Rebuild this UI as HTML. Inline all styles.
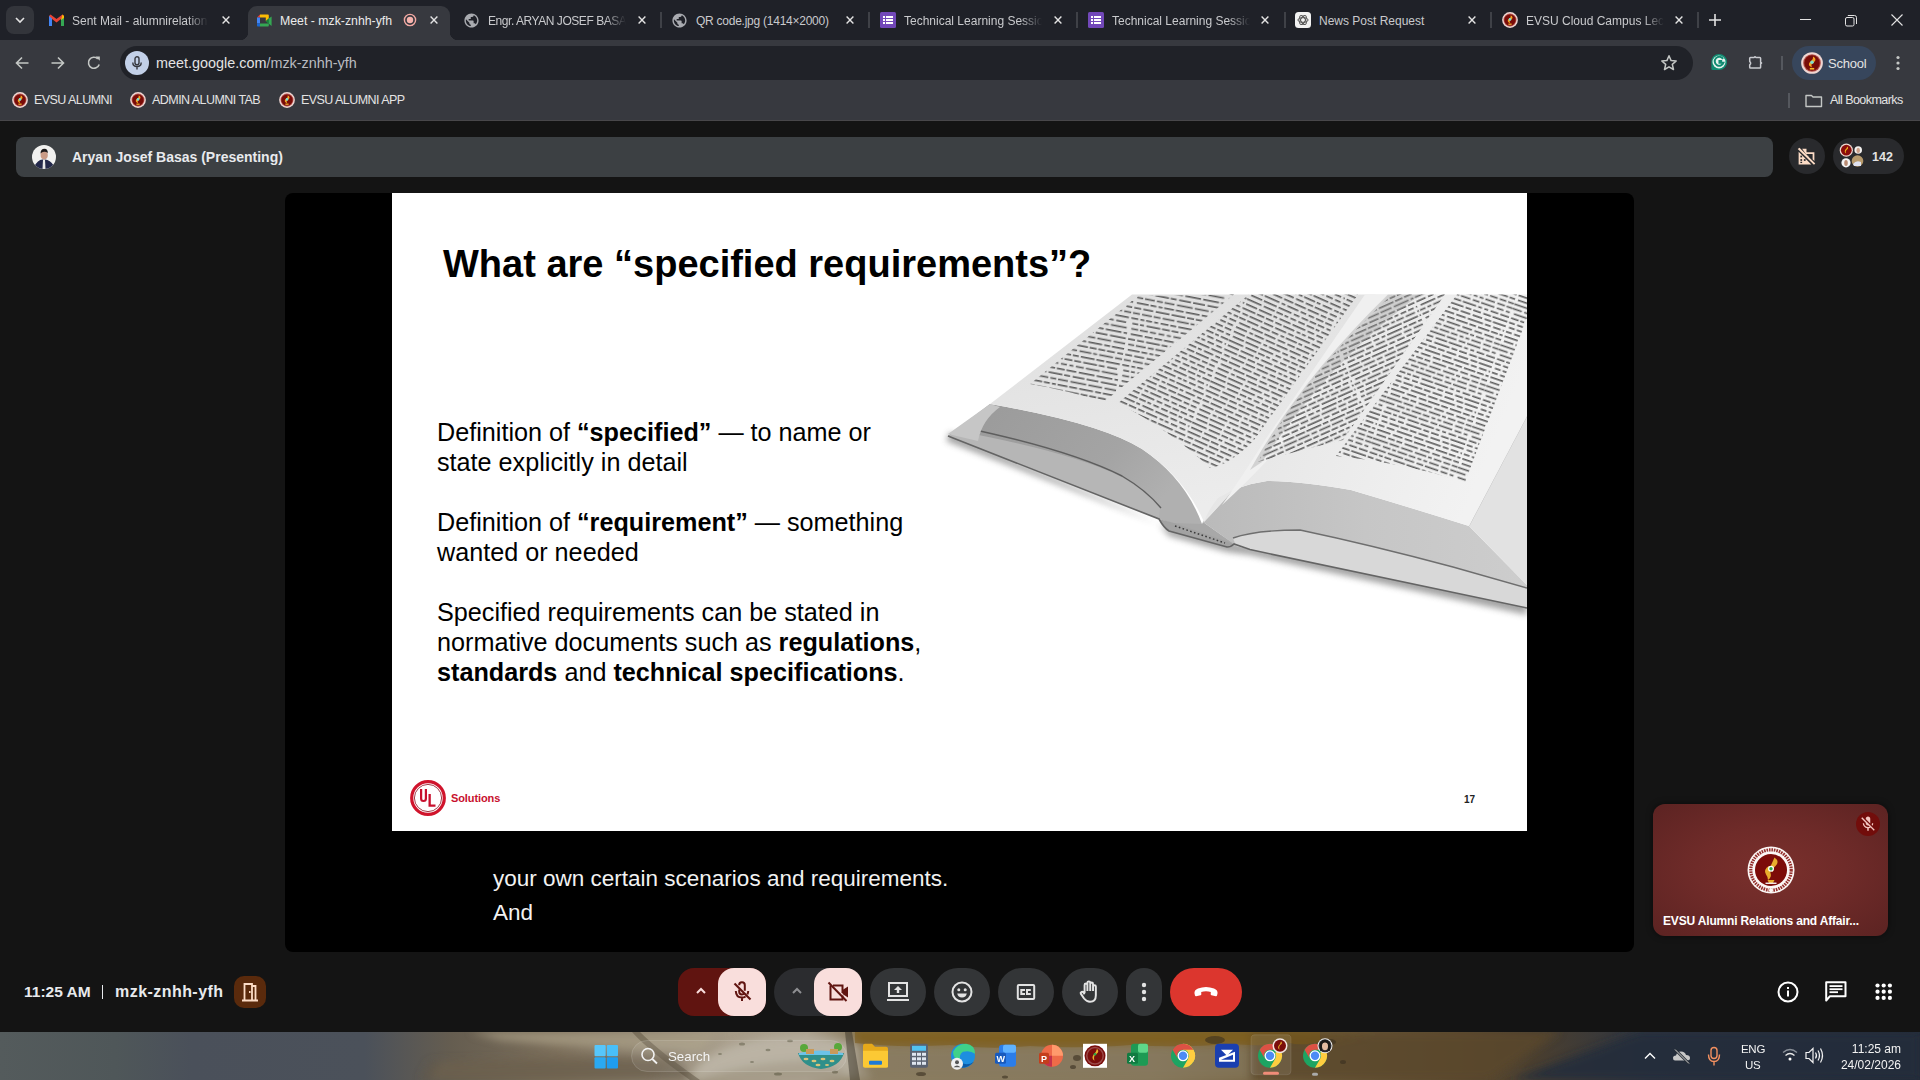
<!DOCTYPE html>
<html><head><meta charset="utf-8">
<style>
*{margin:0;padding:0;box-sizing:border-box}
html,body{width:1920px;height:1080px;overflow:hidden;background:#141414;font-family:"Liberation Sans",sans-serif}
.abs{position:absolute}
#tabs{left:0;top:0;width:1920px;height:40px;background:#1f2128}
#toolbar{left:0;top:40px;width:1920px;height:40px;background:#37393f}
#bookmarks{left:0;top:80px;width:1920px;height:40px;background:#37393f}
#meet{left:0;top:120px;width:1920px;height:912px;background:#141414}
#taskbar{left:0;top:1032px;width:1920px;height:48px;background:#3a3630}
.bmt{position:absolute;top:13px;font-size:12.5px;letter-spacing:-0.55px;color:#e3e3e3;white-space:nowrap;line-height:15px}
.tabt{position:absolute;top:14px;font-size:12px;color:#c9cacd;white-space:nowrap;overflow:hidden}
</style></head><body>
<div id="tabs" class="abs">
  <div class="abs" style="left:6px;top:6px;width:28px;height:28px;border-radius:8px;background:#33353b"></div>
  <svg class="abs" style="left:14px;top:15px" width="12" height="10" viewBox="0 0 12 10"><path d="M2 3 L6 7 L10 3" fill="none" stroke="#e3e3e3" stroke-width="1.6"/></svg>
  <!-- tab1 gmail -->
  <svg class="abs" style="left:49px;top:14px" width="15" height="12" viewBox="0 0 15 12"><path d="M0 2 L0 12 L3 12 L3 5 L7.5 8.5 L12 5 L12 12 L15 12 L15 2 L13.5 0.5 L7.5 5 L1.5 0.5 Z" fill="#ea4335"/><path d="M0 2 L0 12 L3 12 L3 4.5Z" fill="#4285f4"/><path d="M12 4.5 L12 12 L15 12 L15 2Z" fill="#34a853"/><path d="M13.5 0.5 L15 2 L15 4 L12 6Z" fill="#fbbc04"/></svg>
  <div class="tabt" style="left:72px;width:136px;-webkit-mask-image:linear-gradient(90deg,#000 85%,transparent)">Sent Mail - alumnirelations@evsu.edu.ph</div>
  <svg class="abs x" style="left:221px;top:15px" width="10" height="10" viewBox="0 0 10 10"><path d="M1.6 1.6L8.4 8.4M8.4 1.6L1.6 8.4" stroke="#e3e3e3" stroke-width="1.4"/></svg>
  <!-- active tab -->
  <div class="abs" style="left:248px;top:6px;width:202px;height:34px;background:#37393f;border-radius:9px 9px 0 0"></div>
  <div class="abs" style="left:240px;top:32px;width:8px;height:8px;background:radial-gradient(circle at 0 0,#1f2128 8px,#37393f 8.5px)"></div>
  <div class="abs" style="left:450px;top:32px;width:8px;height:8px;background:radial-gradient(circle at 100% 0,#1f2128 8px,#37393f 8.5px)"></div>
  <svg class="abs" style="left:256px;top:13.5px" width="17" height="14" viewBox="0 0 17 14"><path d="M1 3.5 L4 0.5 L4 3.5Z" fill="#ea4335"/><path d="M4 0.5 H12 Q12.8 0.5 12.8 1.3 V4.6 L9.8 7.2 V3.5 H4Z" fill="#fbbc04"/><path d="M1 3.5 H4 V9.5 H1Z" fill="#4285f4"/><path d="M1 9.5 H4 V12.5 H1.8 Q1 12.5 1 11.7Z" fill="#1967d2"/><path d="M4 9.5 H12.8 V11.7 Q12.8 12.5 12 12.5 H4Z" fill="#34a853"/><path d="M12.8 4.6 L15.6 2.4 V12 L12.8 9.8 V9.5 L9.8 7.2Z" fill="#34a853"/><path d="M9.8 7.2 L12.8 4.6 V9.8Z" fill="#188038"/></svg>
  <div class="tabt" style="left:280px;width:120px;font-size:12.3px;color:#ececec">Meet - mzk-znhh-yfh</div>
  <svg class="abs" style="left:403px;top:13px" width="14" height="14" viewBox="0 0 14 14"><circle cx="7" cy="7" r="5.6" fill="none" stroke="#f4aaa4" stroke-width="1.4"/><circle cx="7" cy="7" r="3.2" fill="#f6b3ad"/></svg>
  <svg class="abs" style="left:429px;top:15px" width="10" height="10" viewBox="0 0 10 10"><path d="M1.6 1.6L8.4 8.4M8.4 1.6L1.6 8.4" stroke="#e3e3e3" stroke-width="1.4"/></svg>
  <!-- tab3 -->
  <svg class="abs" style="left:463px;top:12px" width="17" height="17" viewBox="0 0 24 24"><path d="M12 2C6.48 2 2 6.48 2 12s4.48 10 10 10 10-4.48 10-10S17.52 2 12 2zm-1 17.930c-3.950-.49-7-3.850-7-7.930 0-.62.08-1.210.21-1.790L9 15v1c0 1.1.9 2 2 2v1.930zm6.9-2.540c-.26-.81-1-1.390-1.900-1.390h-1v-3c0-.55-.45-1-1-1H8v-2h2c.55 0 1-.45 1-1V7h2c1.100 0 2-.9 2-2v-.41c2.930 1.190 5 4.060 5 7.410 0 2.080-.8 3.970-2.100 5.390z" fill="#a9abb0"/></svg>
  <div class="tabt" style="left:488px;width:138px;letter-spacing:-0.45px;-webkit-mask-image:linear-gradient(90deg,#000 85%,transparent)">Engr. ARYAN JOSEF BASAS</div>
  <svg class="abs" style="left:637px;top:15px" width="10" height="10" viewBox="0 0 10 10"><path d="M1.6 1.6L8.4 8.4M8.4 1.6L1.6 8.4" stroke="#e3e3e3" stroke-width="1.4"/></svg>
  <div class="abs" style="left:660px;top:12px;width:2px;height:16px;background:#3f4147"></div>
  <!-- tab4 -->
  <svg class="abs" style="left:671px;top:12px" width="17" height="17" viewBox="0 0 24 24"><path d="M12 2C6.48 2 2 6.48 2 12s4.48 10 10 10 10-4.48 10-10S17.52 2 12 2zm-1 17.930c-3.950-.49-7-3.850-7-7.930 0-.62.08-1.210.21-1.790L9 15v1c0 1.1.9 2 2 2v1.930zm6.9-2.540c-.26-.81-1-1.390-1.900-1.390h-1v-3c0-.55-.45-1-1-1H8v-2h2c.55 0 1-.45 1-1V7h2c1.100 0 2-.9 2-2v-.41c2.930 1.190 5 4.060 5 7.410 0 2.080-.8 3.970-2.100 5.390z" fill="#a9abb0"/></svg>
  <div class="tabt" style="left:696px;width:140px;letter-spacing:-0.25px">QR code.jpg (1414×2000)</div>
  <svg class="abs" style="left:845px;top:15px" width="10" height="10" viewBox="0 0 10 10"><path d="M1.6 1.6L8.4 8.4M8.4 1.6L1.6 8.4" stroke="#e3e3e3" stroke-width="1.4"/></svg>
  <div class="abs" style="left:868px;top:12px;width:2px;height:16px;background:#3f4147"></div>
  <!-- tab5 -->
  <svg class="abs" style="left:880px;top:12px" width="16" height="16" viewBox="0 0 16 16"><rect width="16" height="16" rx="1.5" fill="#7248b9"/><g fill="#fff"><rect x="3" y="4" width="2" height="2"/><rect x="6" y="4" width="7" height="2"/><rect x="3" y="7" width="2" height="2"/><rect x="6" y="7" width="7" height="2"/><rect x="3" y="10" width="2" height="2"/><rect x="6" y="10" width="7" height="2"/></g></svg>
  <div class="tabt" style="left:904px;width:138px;-webkit-mask-image:linear-gradient(90deg,#000 85%,transparent)">Technical Learning Session</div>
  <svg class="abs" style="left:1053px;top:15px" width="10" height="10" viewBox="0 0 10 10"><path d="M1.6 1.6L8.4 8.4M8.4 1.6L1.6 8.4" stroke="#e3e3e3" stroke-width="1.4"/></svg>
  <div class="abs" style="left:1076px;top:12px;width:2px;height:16px;background:#3f4147"></div>
  <!-- tab6 -->
  <svg class="abs" style="left:1088px;top:12px" width="16" height="16" viewBox="0 0 16 16"><rect width="16" height="16" rx="1.5" fill="#7248b9"/><g fill="#fff"><rect x="3" y="4" width="2" height="2"/><rect x="6" y="4" width="7" height="2"/><rect x="3" y="7" width="2" height="2"/><rect x="6" y="7" width="7" height="2"/><rect x="3" y="10" width="2" height="2"/><rect x="6" y="10" width="7" height="2"/></g></svg>
  <div class="tabt" style="left:1112px;width:138px;-webkit-mask-image:linear-gradient(90deg,#000 85%,transparent)">Technical Learning Session</div>
  <svg class="abs" style="left:1260px;top:15px" width="10" height="10" viewBox="0 0 10 10"><path d="M1.6 1.6L8.4 8.4M8.4 1.6L1.6 8.4" stroke="#e3e3e3" stroke-width="1.4"/></svg>
  <div class="abs" style="left:1284px;top:12px;width:2px;height:16px;background:#3f4147"></div>
  <!-- tab7 -->
  <svg class="abs" style="left:1295px;top:12px" width="16" height="16" viewBox="0 0 16 16"><rect width="16" height="16" rx="3.5" fill="#f2f2f2"/><g fill="none" stroke="#555" stroke-width="1"><ellipse cx="8" cy="8" rx="5" ry="2.3"/><ellipse cx="8" cy="8" rx="5" ry="2.3" transform="rotate(60 8 8)"/><ellipse cx="8" cy="8" rx="5" ry="2.3" transform="rotate(120 8 8)"/></g></svg>
  <div class="tabt" style="left:1319px;width:140px">News Post Request</div>
  <svg class="abs" style="left:1467px;top:15px" width="10" height="10" viewBox="0 0 10 10"><path d="M1.6 1.6L8.4 8.4M8.4 1.6L1.6 8.4" stroke="#e3e3e3" stroke-width="1.4"/></svg>
  <div class="abs" style="left:1490px;top:12px;width:2px;height:16px;background:#3f4147"></div>
  <!-- tab8 -->
  <svg class="abs evsu" style="left:1502px;top:12px" width="16" height="16" viewBox="0 0 16 16"><circle cx="8" cy="8" r="7.9" fill="#efd6d2"/><circle cx="8" cy="8" r="6.4" fill="#b04a44"/><circle cx="8" cy="8" r="5.6" fill="#780c08"/><path d="M8.8 3.2 Q11.8 5 9.6 7.2 L8.6 8 Q6.8 9.4 8.2 11.2 Q4.6 10 6.2 7.6 L7.4 6.6 Q9 5.4 8.8 3.2Z" fill="#f5a623"/><circle cx="8" cy="7.4" r="1.3" fill="#7fe0d0"/><rect x="6.4" y="11.6" width="3.2" height="1.2" fill="#f5b72a"/></svg>
  <div class="tabt" style="left:1526px;width:138px;-webkit-mask-image:linear-gradient(90deg,#000 85%,transparent)">EVSU Cloud Campus Lecture</div>
  <svg class="abs" style="left:1674px;top:15px" width="10" height="10" viewBox="0 0 10 10"><path d="M1.6 1.6L8.4 8.4M8.4 1.6L1.6 8.4" stroke="#e3e3e3" stroke-width="1.4"/></svg>
  <div class="abs" style="left:1697px;top:12px;width:2px;height:16px;background:#3f4147"></div>
  <svg class="abs" style="left:1708px;top:13px" width="14" height="14" viewBox="0 0 14 14"><path d="M7 1V13M1 7H13" stroke="#e3e3e3" stroke-width="1.6"/></svg>
  <!-- window controls -->
  <div class="abs" style="left:1800px;top:19px;width:11px;height:1px;background:#e3e3e3"></div>
  <svg class="abs" style="left:1845px;top:15px" width="12" height="12" viewBox="0 0 12 12"><rect x="0.5" y="2.5" width="8.5" height="8.5" rx="1.5" fill="none" stroke="#e3e3e3" stroke-width="1"/><path d="M2.8 0.5 H9.5 Q11.5 0.5 11.5 2.5 V9" fill="none" stroke="#e3e3e3" stroke-width="1"/></svg>
  <svg class="abs" style="left:1891px;top:14px" width="12" height="12" viewBox="0 0 12 12"><path d="M0.5 0.5L11.5 11.5M11.5 0.5L0.5 11.5" stroke="#e3e3e3" stroke-width="1.1"/></svg>
</div>
<div id="toolbar" class="abs">
  <svg class="abs" style="left:14px;top:15px" width="16" height="16" viewBox="0 0 16 16"><path d="M14.5 8H2.5M8 2.5L2.5 8L8 13.5" fill="none" stroke="#c4c7c5" stroke-width="1.6"/></svg>
  <svg class="abs" style="left:50px;top:15px" width="16" height="16" viewBox="0 0 16 16"><path d="M1.5 8H13.5M8 2.5L13.5 8L8 13.5" fill="none" stroke="#c4c7c5" stroke-width="1.6"/></svg>
  <svg class="abs" style="left:86px;top:15px" width="16" height="16" viewBox="0 0 16 16"><path d="M13.2 9.5 A5.5 5.5 0 1 1 11.8 3.8" fill="none" stroke="#c4c7c5" stroke-width="1.6"/><path d="M9.5 1.5 L13.8 1.5 L13.8 5.8Z" fill="#c4c7c5"/></svg>
  <div class="abs" style="left:120px;top:6px;width:1573px;height:34px;border-radius:17px;background:#202228"></div>
  <div class="abs" style="left:125px;top:11px;width:24px;height:24px;border-radius:12px;background:#c2d0e8"></div>
  <svg class="abs" style="left:131px;top:16px" width="12" height="14" viewBox="0 0 12 14"><rect x="4" y="0.8" width="4" height="8" rx="2" fill="none" stroke="#35373e" stroke-width="1.4"/><path d="M1.8 6.5 Q1.8 10.5 6 10.5 Q10.2 10.5 10.2 6.5 M6 10.5 V13.5" fill="none" stroke="#35373e" stroke-width="1.4"/></svg>
  <div class="abs" id="url" style="left:156px;top:15px;font-size:14.4px;color:#e3e3e3;line-height:16px;white-space:nowrap">meet.google.com<span style="color:#b9bbc0">/mzk-znhh-yfh</span></div>
  <svg class="abs" style="left:1660px;top:14px" width="18" height="18" viewBox="0 0 18 18"><path d="M9 1.8 L11.1 6.6 L16.2 7 L12.3 10.4 L13.5 15.5 L9 12.8 L4.5 15.5 L5.7 10.4 L1.8 7 L6.9 6.6 Z" fill="none" stroke="#c4c7c5" stroke-width="1.5" stroke-linejoin="round"/></svg>
  <svg class="abs" style="left:1710px;top:13px" width="18" height="18" viewBox="0 0 20 20"><path d="M10 1 A9 9 0 1 1 10 19 L3 19 Q1.5 19 1.5 17.5 L1.5 10 A8.5 8.5 0 0 1 10 1Z" fill="#118c72"/><circle cx="10" cy="10" r="7.2" fill="#e9f5f1"/><path d="M14.5 6.5 A5 5 0 1 0 15 10.8 H10.5 V8.8 H13.5" fill="none" stroke="#118c72" stroke-width="2.2"/></svg>
  <svg class="abs" style="left:1747px;top:14px" width="18" height="18" viewBox="0 0 18 18"><path d="M3.5 3.5 H7.2 Q8 1.8 8.8 3.5 H12.8 Q13.6 3.5 13.6 4.3 V8.2 Q15.6 9 13.6 9.8 V13.2 Q13.6 14 12.8 14 H3.5 Q2.7 14 2.7 13.2 V10.8 Q4.6 9.2 2.7 7.4 V4.3 Q2.7 3.5 3.5 3.5Z" fill="none" stroke="#c9cbd0" stroke-width="1.5" stroke-linejoin="round"/></svg>
  <div class="abs" style="left:1781px;top:16px;width:2px;height:14px;background:#55585e"></div>
  <div class="abs" style="left:1792px;top:6px;width:84px;height:34px;border-radius:17px;background:#37465c"></div>
  <svg class="abs" style="left:1801px;top:12px" width="22" height="22" viewBox="0 0 16 16"><circle cx="8" cy="8" r="7.9" fill="#efd6d2"/><circle cx="8" cy="8" r="6.4" fill="#b04a44"/><circle cx="8" cy="8" r="5.6" fill="#780c08"/><path d="M8.8 3.2 Q11.8 5 9.6 7.2 L8.6 8 Q6.8 9.4 8.2 11.2 Q4.6 10 6.2 7.6 L7.4 6.6 Q9 5.4 8.8 3.2Z" fill="#f5a623"/><circle cx="8" cy="7.4" r="1.3" fill="#7fe0d0"/><rect x="6.4" y="11.6" width="3.2" height="1.2" fill="#f5b72a"/></svg>
  <div class="abs" style="left:1828px;top:16px;font-size:13px;letter-spacing:-0.2px;color:#e3e3e3;line-height:16px">School</div>
  <svg class="abs" style="left:1895px;top:15px" width="6" height="16" viewBox="0 0 6 16"><circle cx="3" cy="2.5" r="1.6" fill="#c4c7c5"/><circle cx="3" cy="8" r="1.6" fill="#c4c7c5"/><circle cx="3" cy="13.5" r="1.6" fill="#c4c7c5"/></svg>
</div>
<div id="bookmarks" class="abs">
  <svg class="abs" style="left:12px;top:12px" width="16" height="16" viewBox="0 0 16 16"><circle cx="8" cy="8" r="7.9" fill="#efd6d2"/><circle cx="8" cy="8" r="6.4" fill="#b04a44"/><circle cx="8" cy="8" r="5.6" fill="#780c08"/><path d="M8.8 3.2 Q11.8 5 9.6 7.2 L8.6 8 Q6.8 9.4 8.2 11.2 Q4.6 10 6.2 7.6 L7.4 6.6 Q9 5.4 8.8 3.2Z" fill="#f5a623"/><circle cx="8" cy="7.4" r="1.3" fill="#7fe0d0"/><rect x="6.4" y="11.6" width="3.2" height="1.2" fill="#f5b72a"/></svg>
  <div class="bmt" style="left:34px">EVSU ALUMNI</div>
  <svg class="abs" style="left:130px;top:12px" width="16" height="16" viewBox="0 0 16 16"><circle cx="8" cy="8" r="7.9" fill="#efd6d2"/><circle cx="8" cy="8" r="6.4" fill="#b04a44"/><circle cx="8" cy="8" r="5.6" fill="#780c08"/><path d="M8.8 3.2 Q11.8 5 9.6 7.2 L8.6 8 Q6.8 9.4 8.2 11.2 Q4.6 10 6.2 7.6 L7.4 6.6 Q9 5.4 8.8 3.2Z" fill="#f5a623"/><circle cx="8" cy="7.4" r="1.3" fill="#7fe0d0"/><rect x="6.4" y="11.6" width="3.2" height="1.2" fill="#f5b72a"/></svg>
  <div class="bmt" style="left:152px">ADMIN ALUMNI TAB</div>
  <svg class="abs" style="left:279px;top:12px" width="16" height="16" viewBox="0 0 16 16"><circle cx="8" cy="8" r="7.9" fill="#efd6d2"/><circle cx="8" cy="8" r="6.4" fill="#b04a44"/><circle cx="8" cy="8" r="5.6" fill="#780c08"/><path d="M8.8 3.2 Q11.8 5 9.6 7.2 L8.6 8 Q6.8 9.4 8.2 11.2 Q4.6 10 6.2 7.6 L7.4 6.6 Q9 5.4 8.8 3.2Z" fill="#f5a623"/><circle cx="8" cy="7.4" r="1.3" fill="#7fe0d0"/><rect x="6.4" y="11.6" width="3.2" height="1.2" fill="#f5b72a"/></svg>
  <div class="bmt" style="left:301px">EVSU ALUMNI APP</div>
  <div class="abs" style="left:1788px;top:13px;width:2px;height:15px;background:#55585e"></div>
  <svg class="abs" style="left:1805px;top:14px" width="18" height="14" viewBox="0 0 18 14"><path d="M1 1.5 H6.5 L8 3 H16.5 V12.5 H1 Z" fill="none" stroke="#c4c7c5" stroke-width="1.4" stroke-linejoin="round"/></svg>
  <div class="bmt" style="left:1830px">All Bookmarks</div>
</div>

<div id="meet" class="abs">
  <div class="abs" style="left:0;top:0;width:1920px;height:1px;background:#48474a"></div>
  <!-- presenter bar -->
  <div class="abs" style="left:16px;top:17px;width:1757px;height:40px;border-radius:8px;background:#3c4043"></div>
  <svg class="abs" style="left:32px;top:25px" width="24" height="24" viewBox="0 0 24 24"><defs><clipPath id="avc"><circle cx="12" cy="12" r="12"/></clipPath></defs><g clip-path="url(#avc)"><rect width="24" height="24" fill="#f1f1ef"/><path d="M2 22 Q6 14 11 14.5 L13 14.5 Q18 14.5 22 21 L22 24 L2 24Z" fill="#23284a"/><path d="M11 14.5 L13 14.5 L13.5 24 L10.5 24Z" fill="#e8e8e8"/><ellipse cx="12.2" cy="10" rx="3.6" ry="4.4" fill="#c99b85"/><path d="M8.5 8.5 Q8.5 4 12.5 3.8 Q16 4 15.8 8 Q14 6.5 12 6.8 Q10 6.8 8.5 8.5Z" fill="#1c1a1a"/></g></svg>
  <div class="abs" id="pres" style="left:72px;top:29px;font-size:14px;font-weight:bold;color:#e8eaed;white-space:nowrap;line-height:17px">Aryan Josef Basas (Presenting)</div>
  <div class="abs" style="left:1789px;top:18px;width:36px;height:36px;border-radius:18px;background:#292a2d"></div>
  <svg class="abs" style="left:1796px;top:146px;top:26px" width="21" height="21" viewBox="0 0 24 24"><path d="M2 3.5 L4 2 L22 20 L20.5 21.5 Z" fill="#fcdcc6"/><path d="M3 7 L3 21 L17.5 21 L3 6.5Z M7 3 L12 3 L12 7 L21 7 L21 17 L19 15 L19 9 L12 9 L12 11 L14 11 L14 13 Z" fill="#fcdcc6"/><g fill="#292a2d"><rect x="5" y="11" width="2" height="2"/><rect x="5" y="15" width="2" height="2"/><rect x="9" y="15" width="2" height="2"/><rect x="5" y="18" width="2" height="1.5"/></g></svg>
  <div class="abs" style="left:1833px;top:18px;width:71px;height:36px;border-radius:18px;background:#292a2d"></div>
  <svg class="abs" style="left:1838px;top:22px" width="28" height="28" viewBox="0 0 28 28">
    <circle cx="8.3" cy="8.2" r="6.6" fill="#f0d8d0"/><circle cx="8.3" cy="8.2" r="5.4" fill="#8a0d0a"/><path d="M9.5 4.5 Q11 6.5 8.8 7.8 Q7 9 8 11.5 Q6 10 7 8 Q8.5 6.5 9.5 4.5Z" fill="#f2b51c"/>
    <circle cx="20.2" cy="8" r="3.8" fill="#f4f2f0"/><ellipse cx="20.2" cy="8.4" rx="1.8" ry="2.6" fill="#caa089"/>
    <circle cx="8" cy="20.8" r="4.6" fill="#f4f4f4"/><ellipse cx="8" cy="21" rx="1.8" ry="3" fill="#b98b73"/>
    <circle cx="19.5" cy="19" r="5.8" fill="#b79a6c"/><path d="M15 22 Q18 18 23 20 L23 24 L16 24Z" fill="#dfe2f0"/>
  </svg>
  <div class="abs" style="left:1872px;top:30px;font-size:12.5px;font-weight:bold;color:#e3e3e3;line-height:14px">142</div>
  <!-- presentation -->
  <div class="abs" style="left:285px;top:73px;width:1349px;height:759px;border-radius:8px;background:#000"></div>
  <div class="abs" id="slide" style="left:392px;top:73px;width:1135px;height:638px;background:#fff;overflow:hidden">
    <svg class="abs" style="left:0;top:0" width="1135" height="638" viewBox="392 193 1135 638">
    <defs>
      <pattern id="txt1" width="90" height="47.70" patternUnits="userSpaceOnUse" patternTransform="rotate(11)"><rect x="1.3" y="0.00" width="7.0" height="1.6" fill="#5a5a5a"/><rect x="10.5" y="0.00" width="4.0" height="1.6" fill="#5a5a5a"/><rect x="16.3" y="0.00" width="6.0" height="1.6" fill="#5a5a5a"/><rect x="24.5" y="0.00" width="4.0" height="1.6" fill="#5a5a5a"/><rect x="31.1" y="0.00" width="8.0" height="1.6" fill="#5a5a5a"/><rect x="40.9" y="0.00" width="6.0" height="1.6" fill="#5a5a5a"/><rect x="49.1" y="0.00" width="14.0" height="1.6" fill="#5a5a5a"/><rect x="64.9" y="0.00" width="8.0" height="1.6" fill="#5a5a5a"/><rect x="74.7" y="0.00" width="14.0" height="1.6" fill="#5a5a5a"/><rect x="3.3" y="5.30" width="6.0" height="1.6" fill="#5a5a5a"/><rect x="11.1" y="5.30" width="4.0" height="1.6" fill="#5a5a5a"/><rect x="17.7" y="5.30" width="14.0" height="1.6" fill="#5a5a5a"/><rect x="33.5" y="5.30" width="8.0" height="1.6" fill="#5a5a5a"/><rect x="43.3" y="5.30" width="7.0" height="1.6" fill="#5a5a5a"/><rect x="52.5" y="5.30" width="14.0" height="1.6" fill="#5a5a5a"/><rect x="68.3" y="5.30" width="6.0" height="1.6" fill="#5a5a5a"/><rect x="76.9" y="5.30" width="10.0" height="1.6" fill="#5a5a5a"/><rect x="3.3" y="10.60" width="7.0" height="1.6" fill="#5a5a5a"/><rect x="12.1" y="10.60" width="8.0" height="1.6" fill="#5a5a5a"/><rect x="22.3" y="10.60" width="6.0" height="1.6" fill="#5a5a5a"/><rect x="30.9" y="10.60" width="6.0" height="1.6" fill="#5a5a5a"/><rect x="39.5" y="10.60" width="4.0" height="1.6" fill="#5a5a5a"/><rect x="46.1" y="10.60" width="8.0" height="1.6" fill="#5a5a5a"/><rect x="56.3" y="10.60" width="14.0" height="1.6" fill="#5a5a5a"/><rect x="72.5" y="10.60" width="16.0" height="1.6" fill="#5a5a5a"/><rect x="3.7" y="15.90" width="12.0" height="1.6" fill="#5a5a5a"/><rect x="17.9" y="15.90" width="8.0" height="1.6" fill="#5a5a5a"/><rect x="27.7" y="15.90" width="8.0" height="1.6" fill="#5a5a5a"/><rect x="37.5" y="15.90" width="10.0" height="1.6" fill="#5a5a5a"/><rect x="50.1" y="15.90" width="16.0" height="1.6" fill="#5a5a5a"/><rect x="68.3" y="15.90" width="16.0" height="1.6" fill="#5a5a5a"/><rect x="86.5" y="15.90" width="3.5" height="1.6" fill="#5a5a5a"/><rect x="2.0" y="21.20" width="7.0" height="1.6" fill="#5a5a5a"/><rect x="11.2" y="21.20" width="7.0" height="1.6" fill="#5a5a5a"/><rect x="20.4" y="21.20" width="14.0" height="1.6" fill="#5a5a5a"/><rect x="36.2" y="21.20" width="6.0" height="1.6" fill="#5a5a5a"/><rect x="44.8" y="21.20" width="12.0" height="1.6" fill="#5a5a5a"/><rect x="59.0" y="21.20" width="12.0" height="1.6" fill="#5a5a5a"/><rect x="73.6" y="21.20" width="16.0" height="1.6" fill="#5a5a5a"/><rect x="3.2" y="26.50" width="6.0" height="1.6" fill="#5a5a5a"/><rect x="11.0" y="26.50" width="10.0" height="1.6" fill="#5a5a5a"/><rect x="23.2" y="26.50" width="6.0" height="1.6" fill="#5a5a5a"/><rect x="31.0" y="26.50" width="10.0" height="1.6" fill="#5a5a5a"/><rect x="43.6" y="26.50" width="16.0" height="1.6" fill="#5a5a5a"/><rect x="61.8" y="26.50" width="14.0" height="1.6" fill="#5a5a5a"/><rect x="78.4" y="26.50" width="11.6" height="1.6" fill="#5a5a5a"/><rect x="3.8" y="31.80" width="12.0" height="1.6" fill="#5a5a5a"/><rect x="17.6" y="31.80" width="6.0" height="1.6" fill="#5a5a5a"/><rect x="25.8" y="31.80" width="4.0" height="1.6" fill="#5a5a5a"/><rect x="31.6" y="31.80" width="10.0" height="1.6" fill="#5a5a5a"/><rect x="43.4" y="31.80" width="8.0" height="1.6" fill="#5a5a5a"/><rect x="53.6" y="31.80" width="14.0" height="1.6" fill="#5a5a5a"/><rect x="69.8" y="31.80" width="6.0" height="1.6" fill="#5a5a5a"/><rect x="77.6" y="31.80" width="12.4" height="1.6" fill="#5a5a5a"/><rect x="2.2" y="37.10" width="7.0" height="1.6" fill="#5a5a5a"/><rect x="11.4" y="37.10" width="10.0" height="1.6" fill="#5a5a5a"/><rect x="24.0" y="37.10" width="14.0" height="1.6" fill="#5a5a5a"/><rect x="40.2" y="37.10" width="14.0" height="1.6" fill="#5a5a5a"/><rect x="56.0" y="37.10" width="7.0" height="1.6" fill="#5a5a5a"/><rect x="64.8" y="37.10" width="7.0" height="1.6" fill="#5a5a5a"/><rect x="73.6" y="37.10" width="8.0" height="1.6" fill="#5a5a5a"/><rect x="84.2" y="37.10" width="5.8" height="1.6" fill="#5a5a5a"/><rect x="1.9" y="42.40" width="7.0" height="1.6" fill="#5a5a5a"/><rect x="11.1" y="42.40" width="10.0" height="1.6" fill="#5a5a5a"/><rect x="22.9" y="42.40" width="7.0" height="1.6" fill="#5a5a5a"/><rect x="32.1" y="42.40" width="12.0" height="1.6" fill="#5a5a5a"/><rect x="46.7" y="42.40" width="12.0" height="1.6" fill="#5a5a5a"/><rect x="60.5" y="42.40" width="4.0" height="1.6" fill="#5a5a5a"/><rect x="66.7" y="42.40" width="14.0" height="1.6" fill="#5a5a5a"/><rect x="82.9" y="42.40" width="7.1" height="1.6" fill="#5a5a5a"/></pattern><pattern id="txt2" width="90" height="45.00" patternUnits="userSpaceOnUse" patternTransform="rotate(24)"><rect x="0.4" y="0.00" width="14.0" height="1.6" fill="#5a5a5a"/><rect x="16.2" y="0.00" width="8.0" height="1.6" fill="#5a5a5a"/><rect x="26.0" y="0.00" width="8.0" height="1.6" fill="#5a5a5a"/><rect x="36.2" y="0.00" width="7.0" height="1.6" fill="#5a5a5a"/><rect x="45.0" y="0.00" width="12.0" height="1.6" fill="#5a5a5a"/><rect x="59.6" y="0.00" width="4.0" height="1.6" fill="#5a5a5a"/><rect x="65.4" y="0.00" width="4.0" height="1.6" fill="#5a5a5a"/><rect x="72.0" y="0.00" width="7.0" height="1.6" fill="#5a5a5a"/><rect x="81.6" y="0.00" width="6.0" height="1.6" fill="#5a5a5a"/><rect x="2.5" y="5.00" width="6.0" height="1.6" fill="#5a5a5a"/><rect x="10.3" y="5.00" width="14.0" height="1.6" fill="#5a5a5a"/><rect x="26.1" y="5.00" width="10.0" height="1.6" fill="#5a5a5a"/><rect x="38.3" y="5.00" width="12.0" height="1.6" fill="#5a5a5a"/><rect x="52.5" y="5.00" width="6.0" height="1.6" fill="#5a5a5a"/><rect x="60.3" y="5.00" width="16.0" height="1.6" fill="#5a5a5a"/><rect x="78.5" y="5.00" width="11.5" height="1.6" fill="#5a5a5a"/><rect x="1.2" y="10.00" width="7.0" height="1.6" fill="#5a5a5a"/><rect x="10.0" y="10.00" width="12.0" height="1.6" fill="#5a5a5a"/><rect x="24.6" y="10.00" width="10.0" height="1.6" fill="#5a5a5a"/><rect x="36.8" y="10.00" width="7.0" height="1.6" fill="#5a5a5a"/><rect x="46.4" y="10.00" width="4.0" height="1.6" fill="#5a5a5a"/><rect x="52.2" y="10.00" width="12.0" height="1.6" fill="#5a5a5a"/><rect x="66.0" y="10.00" width="4.0" height="1.6" fill="#5a5a5a"/><rect x="72.6" y="10.00" width="10.0" height="1.6" fill="#5a5a5a"/><rect x="85.2" y="10.00" width="4.8" height="1.6" fill="#5a5a5a"/><rect x="3.4" y="15.00" width="12.0" height="1.6" fill="#5a5a5a"/><rect x="17.2" y="15.00" width="12.0" height="1.6" fill="#5a5a5a"/><rect x="31.0" y="15.00" width="12.0" height="1.6" fill="#5a5a5a"/><rect x="45.6" y="15.00" width="8.0" height="1.6" fill="#5a5a5a"/><rect x="56.2" y="15.00" width="8.0" height="1.6" fill="#5a5a5a"/><rect x="66.0" y="15.00" width="14.0" height="1.6" fill="#5a5a5a"/><rect x="82.6" y="15.00" width="7.4" height="1.6" fill="#5a5a5a"/><rect x="2.1" y="20.00" width="12.0" height="1.6" fill="#5a5a5a"/><rect x="16.7" y="20.00" width="4.0" height="1.6" fill="#5a5a5a"/><rect x="22.5" y="20.00" width="10.0" height="1.6" fill="#5a5a5a"/><rect x="34.7" y="20.00" width="10.0" height="1.6" fill="#5a5a5a"/><rect x="46.5" y="20.00" width="12.0" height="1.6" fill="#5a5a5a"/><rect x="60.7" y="20.00" width="12.0" height="1.6" fill="#5a5a5a"/><rect x="74.9" y="20.00" width="6.0" height="1.6" fill="#5a5a5a"/><rect x="82.7" y="20.00" width="6.0" height="1.6" fill="#5a5a5a"/><rect x="1.9" y="25.00" width="12.0" height="1.6" fill="#5a5a5a"/><rect x="15.7" y="25.00" width="16.0" height="1.6" fill="#5a5a5a"/><rect x="34.3" y="25.00" width="4.0" height="1.6" fill="#5a5a5a"/><rect x="40.5" y="25.00" width="12.0" height="1.6" fill="#5a5a5a"/><rect x="55.1" y="25.00" width="6.0" height="1.6" fill="#5a5a5a"/><rect x="63.7" y="25.00" width="6.0" height="1.6" fill="#5a5a5a"/><rect x="71.9" y="25.00" width="8.0" height="1.6" fill="#5a5a5a"/><rect x="82.1" y="25.00" width="7.0" height="1.6" fill="#5a5a5a"/><rect x="3.2" y="30.00" width="12.0" height="1.6" fill="#5a5a5a"/><rect x="17.0" y="30.00" width="14.0" height="1.6" fill="#5a5a5a"/><rect x="33.2" y="30.00" width="14.0" height="1.6" fill="#5a5a5a"/><rect x="49.8" y="30.00" width="6.0" height="1.6" fill="#5a5a5a"/><rect x="58.4" y="30.00" width="7.0" height="1.6" fill="#5a5a5a"/><rect x="67.2" y="30.00" width="7.0" height="1.6" fill="#5a5a5a"/><rect x="76.0" y="30.00" width="7.0" height="1.6" fill="#5a5a5a"/><rect x="85.6" y="30.00" width="4.4" height="1.6" fill="#5a5a5a"/><rect x="0.6" y="35.00" width="16.0" height="1.6" fill="#5a5a5a"/><rect x="19.2" y="35.00" width="12.0" height="1.6" fill="#5a5a5a"/><rect x="33.0" y="35.00" width="7.0" height="1.6" fill="#5a5a5a"/><rect x="41.8" y="35.00" width="4.0" height="1.6" fill="#5a5a5a"/><rect x="48.4" y="35.00" width="6.0" height="1.6" fill="#5a5a5a"/><rect x="57.0" y="35.00" width="7.0" height="1.6" fill="#5a5a5a"/><rect x="66.2" y="35.00" width="8.0" height="1.6" fill="#5a5a5a"/><rect x="76.0" y="35.00" width="4.0" height="1.6" fill="#5a5a5a"/><rect x="82.2" y="35.00" width="7.8" height="1.6" fill="#5a5a5a"/><rect x="2.0" y="40.00" width="12.0" height="1.6" fill="#5a5a5a"/><rect x="16.2" y="40.00" width="14.0" height="1.6" fill="#5a5a5a"/><rect x="32.0" y="40.00" width="4.0" height="1.6" fill="#5a5a5a"/><rect x="38.6" y="40.00" width="12.0" height="1.6" fill="#5a5a5a"/><rect x="52.8" y="40.00" width="14.0" height="1.6" fill="#5a5a5a"/><rect x="69.4" y="40.00" width="7.0" height="1.6" fill="#5a5a5a"/><rect x="79.0" y="40.00" width="7.0" height="1.6" fill="#5a5a5a"/><rect x="88.6" y="40.00" width="1.4" height="1.6" fill="#5a5a5a"/></pattern><pattern id="txt3" width="90" height="41.40" patternUnits="userSpaceOnUse" patternTransform="rotate(-24)"><rect x="3.1" y="0.00" width="4.0" height="1.6" fill="#5a5a5a"/><rect x="8.9" y="0.00" width="7.0" height="1.6" fill="#5a5a5a"/><rect x="17.7" y="0.00" width="16.0" height="1.6" fill="#5a5a5a"/><rect x="36.3" y="0.00" width="6.0" height="1.6" fill="#5a5a5a"/><rect x="44.9" y="0.00" width="4.0" height="1.6" fill="#5a5a5a"/><rect x="51.1" y="0.00" width="16.0" height="1.6" fill="#5a5a5a"/><rect x="68.9" y="0.00" width="4.0" height="1.6" fill="#5a5a5a"/><rect x="74.7" y="0.00" width="8.0" height="1.6" fill="#5a5a5a"/><rect x="84.9" y="0.00" width="4.0" height="1.6" fill="#5a5a5a"/><rect x="2.0" y="4.60" width="4.0" height="1.6" fill="#5a5a5a"/><rect x="7.8" y="4.60" width="16.0" height="1.6" fill="#5a5a5a"/><rect x="26.0" y="4.60" width="8.0" height="1.6" fill="#5a5a5a"/><rect x="36.6" y="4.60" width="10.0" height="1.6" fill="#5a5a5a"/><rect x="48.8" y="4.60" width="16.0" height="1.6" fill="#5a5a5a"/><rect x="67.4" y="4.60" width="8.0" height="1.6" fill="#5a5a5a"/><rect x="78.0" y="4.60" width="10.0" height="1.6" fill="#5a5a5a"/><rect x="3.6" y="9.20" width="8.0" height="1.6" fill="#5a5a5a"/><rect x="13.8" y="9.20" width="7.0" height="1.6" fill="#5a5a5a"/><rect x="23.0" y="9.20" width="6.0" height="1.6" fill="#5a5a5a"/><rect x="31.2" y="9.20" width="16.0" height="1.6" fill="#5a5a5a"/><rect x="49.4" y="9.20" width="6.0" height="1.6" fill="#5a5a5a"/><rect x="58.0" y="9.20" width="8.0" height="1.6" fill="#5a5a5a"/><rect x="68.2" y="9.20" width="6.0" height="1.6" fill="#5a5a5a"/><rect x="76.0" y="9.20" width="10.0" height="1.6" fill="#5a5a5a"/><rect x="87.8" y="9.20" width="2.2" height="1.6" fill="#5a5a5a"/><rect x="2.6" y="13.80" width="12.0" height="1.6" fill="#5a5a5a"/><rect x="16.4" y="13.80" width="10.0" height="1.6" fill="#5a5a5a"/><rect x="28.2" y="13.80" width="16.0" height="1.6" fill="#5a5a5a"/><rect x="46.0" y="13.80" width="6.0" height="1.6" fill="#5a5a5a"/><rect x="54.2" y="13.80" width="16.0" height="1.6" fill="#5a5a5a"/><rect x="72.0" y="13.80" width="8.0" height="1.6" fill="#5a5a5a"/><rect x="81.8" y="13.80" width="8.2" height="1.6" fill="#5a5a5a"/><rect x="1.6" y="18.40" width="14.0" height="1.6" fill="#5a5a5a"/><rect x="17.4" y="18.40" width="12.0" height="1.6" fill="#5a5a5a"/><rect x="31.6" y="18.40" width="6.0" height="1.6" fill="#5a5a5a"/><rect x="40.2" y="18.40" width="12.0" height="1.6" fill="#5a5a5a"/><rect x="54.0" y="18.40" width="12.0" height="1.6" fill="#5a5a5a"/><rect x="68.6" y="18.40" width="16.0" height="1.6" fill="#5a5a5a"/><rect x="86.8" y="18.40" width="3.2" height="1.6" fill="#5a5a5a"/><rect x="1.3" y="23.00" width="10.0" height="1.6" fill="#5a5a5a"/><rect x="13.9" y="23.00" width="6.0" height="1.6" fill="#5a5a5a"/><rect x="21.7" y="23.00" width="8.0" height="1.6" fill="#5a5a5a"/><rect x="31.5" y="23.00" width="6.0" height="1.6" fill="#5a5a5a"/><rect x="39.7" y="23.00" width="10.0" height="1.6" fill="#5a5a5a"/><rect x="51.5" y="23.00" width="7.0" height="1.6" fill="#5a5a5a"/><rect x="60.7" y="23.00" width="7.0" height="1.6" fill="#5a5a5a"/><rect x="69.9" y="23.00" width="10.0" height="1.6" fill="#5a5a5a"/><rect x="82.1" y="23.00" width="7.0" height="1.6" fill="#5a5a5a"/><rect x="3.7" y="27.60" width="16.0" height="1.6" fill="#5a5a5a"/><rect x="22.3" y="27.60" width="12.0" height="1.6" fill="#5a5a5a"/><rect x="36.1" y="27.60" width="10.0" height="1.6" fill="#5a5a5a"/><rect x="47.9" y="27.60" width="7.0" height="1.6" fill="#5a5a5a"/><rect x="57.1" y="27.60" width="6.0" height="1.6" fill="#5a5a5a"/><rect x="65.3" y="27.60" width="4.0" height="1.6" fill="#5a5a5a"/><rect x="71.9" y="27.60" width="6.0" height="1.6" fill="#5a5a5a"/><rect x="80.1" y="27.60" width="6.0" height="1.6" fill="#5a5a5a"/><rect x="88.7" y="27.60" width="1.3" height="1.6" fill="#5a5a5a"/><rect x="1.1" y="32.20" width="6.0" height="1.6" fill="#5a5a5a"/><rect x="9.3" y="32.20" width="4.0" height="1.6" fill="#5a5a5a"/><rect x="15.5" y="32.20" width="14.0" height="1.6" fill="#5a5a5a"/><rect x="31.7" y="32.20" width="7.0" height="1.6" fill="#5a5a5a"/><rect x="40.5" y="32.20" width="8.0" height="1.6" fill="#5a5a5a"/><rect x="50.3" y="32.20" width="7.0" height="1.6" fill="#5a5a5a"/><rect x="59.5" y="32.20" width="4.0" height="1.6" fill="#5a5a5a"/><rect x="65.3" y="32.20" width="8.0" height="1.6" fill="#5a5a5a"/><rect x="75.5" y="32.20" width="10.0" height="1.6" fill="#5a5a5a"/><rect x="88.1" y="32.20" width="1.9" height="1.6" fill="#5a5a5a"/><rect x="1.8" y="36.80" width="7.0" height="1.6" fill="#5a5a5a"/><rect x="11.0" y="36.80" width="12.0" height="1.6" fill="#5a5a5a"/><rect x="24.8" y="36.80" width="10.0" height="1.6" fill="#5a5a5a"/><rect x="36.6" y="36.80" width="4.0" height="1.6" fill="#5a5a5a"/><rect x="42.4" y="36.80" width="8.0" height="1.6" fill="#5a5a5a"/><rect x="53.0" y="36.80" width="16.0" height="1.6" fill="#5a5a5a"/><rect x="70.8" y="36.80" width="16.0" height="1.6" fill="#5a5a5a"/><rect x="88.6" y="36.80" width="1.4" height="1.6" fill="#5a5a5a"/></pattern><pattern id="txt4" width="90" height="43.20" patternUnits="userSpaceOnUse" patternTransform="rotate(19)"><rect x="2.0" y="0.00" width="14.0" height="1.6" fill="#5a5a5a"/><rect x="18.6" y="0.00" width="10.0" height="1.6" fill="#5a5a5a"/><rect x="31.2" y="0.00" width="8.0" height="1.6" fill="#5a5a5a"/><rect x="41.0" y="0.00" width="12.0" height="1.6" fill="#5a5a5a"/><rect x="54.8" y="0.00" width="7.0" height="1.6" fill="#5a5a5a"/><rect x="64.0" y="0.00" width="12.0" height="1.6" fill="#5a5a5a"/><rect x="77.8" y="0.00" width="7.0" height="1.6" fill="#5a5a5a"/><rect x="86.6" y="0.00" width="3.4" height="1.6" fill="#5a5a5a"/><rect x="3.0" y="4.80" width="10.0" height="1.6" fill="#5a5a5a"/><rect x="15.2" y="4.80" width="7.0" height="1.6" fill="#5a5a5a"/><rect x="24.0" y="4.80" width="6.0" height="1.6" fill="#5a5a5a"/><rect x="32.6" y="4.80" width="14.0" height="1.6" fill="#5a5a5a"/><rect x="49.2" y="4.80" width="10.0" height="1.6" fill="#5a5a5a"/><rect x="61.8" y="4.80" width="8.0" height="1.6" fill="#5a5a5a"/><rect x="72.4" y="4.80" width="10.0" height="1.6" fill="#5a5a5a"/><rect x="84.2" y="4.80" width="5.8" height="1.6" fill="#5a5a5a"/><rect x="0.6" y="9.60" width="16.0" height="1.6" fill="#5a5a5a"/><rect x="18.4" y="9.60" width="10.0" height="1.6" fill="#5a5a5a"/><rect x="30.6" y="9.60" width="12.0" height="1.6" fill="#5a5a5a"/><rect x="45.2" y="9.60" width="12.0" height="1.6" fill="#5a5a5a"/><rect x="59.0" y="9.60" width="4.0" height="1.6" fill="#5a5a5a"/><rect x="65.2" y="9.60" width="8.0" height="1.6" fill="#5a5a5a"/><rect x="75.4" y="9.60" width="7.0" height="1.6" fill="#5a5a5a"/><rect x="84.2" y="9.60" width="5.8" height="1.6" fill="#5a5a5a"/><rect x="0.3" y="14.40" width="10.0" height="1.6" fill="#5a5a5a"/><rect x="12.9" y="14.40" width="8.0" height="1.6" fill="#5a5a5a"/><rect x="22.7" y="14.40" width="4.0" height="1.6" fill="#5a5a5a"/><rect x="28.5" y="14.40" width="10.0" height="1.6" fill="#5a5a5a"/><rect x="40.3" y="14.40" width="7.0" height="1.6" fill="#5a5a5a"/><rect x="49.5" y="14.40" width="4.0" height="1.6" fill="#5a5a5a"/><rect x="55.7" y="14.40" width="4.0" height="1.6" fill="#5a5a5a"/><rect x="61.9" y="14.40" width="10.0" height="1.6" fill="#5a5a5a"/><rect x="74.5" y="14.40" width="8.0" height="1.6" fill="#5a5a5a"/><rect x="84.3" y="14.40" width="5.7" height="1.6" fill="#5a5a5a"/><rect x="3.6" y="19.20" width="14.0" height="1.6" fill="#5a5a5a"/><rect x="19.8" y="19.20" width="16.0" height="1.6" fill="#5a5a5a"/><rect x="37.6" y="19.20" width="10.0" height="1.6" fill="#5a5a5a"/><rect x="50.2" y="19.20" width="7.0" height="1.6" fill="#5a5a5a"/><rect x="59.0" y="19.20" width="14.0" height="1.6" fill="#5a5a5a"/><rect x="75.6" y="19.20" width="7.0" height="1.6" fill="#5a5a5a"/><rect x="85.2" y="19.20" width="4.0" height="1.6" fill="#5a5a5a"/><rect x="2.3" y="24.00" width="8.0" height="1.6" fill="#5a5a5a"/><rect x="12.1" y="24.00" width="4.0" height="1.6" fill="#5a5a5a"/><rect x="17.9" y="24.00" width="7.0" height="1.6" fill="#5a5a5a"/><rect x="27.5" y="24.00" width="12.0" height="1.6" fill="#5a5a5a"/><rect x="41.3" y="24.00" width="14.0" height="1.6" fill="#5a5a5a"/><rect x="57.5" y="24.00" width="4.0" height="1.6" fill="#5a5a5a"/><rect x="64.1" y="24.00" width="4.0" height="1.6" fill="#5a5a5a"/><rect x="70.7" y="24.00" width="8.0" height="1.6" fill="#5a5a5a"/><rect x="80.9" y="24.00" width="9.1" height="1.6" fill="#5a5a5a"/><rect x="1.8" y="28.80" width="6.0" height="1.6" fill="#5a5a5a"/><rect x="10.4" y="28.80" width="6.0" height="1.6" fill="#5a5a5a"/><rect x="19.0" y="28.80" width="6.0" height="1.6" fill="#5a5a5a"/><rect x="27.6" y="28.80" width="16.0" height="1.6" fill="#5a5a5a"/><rect x="45.8" y="28.80" width="6.0" height="1.6" fill="#5a5a5a"/><rect x="54.0" y="28.80" width="8.0" height="1.6" fill="#5a5a5a"/><rect x="64.6" y="28.80" width="8.0" height="1.6" fill="#5a5a5a"/><rect x="74.4" y="28.80" width="15.6" height="1.6" fill="#5a5a5a"/><rect x="3.4" y="33.60" width="6.0" height="1.6" fill="#5a5a5a"/><rect x="11.6" y="33.60" width="10.0" height="1.6" fill="#5a5a5a"/><rect x="23.4" y="33.60" width="8.0" height="1.6" fill="#5a5a5a"/><rect x="33.2" y="33.60" width="7.0" height="1.6" fill="#5a5a5a"/><rect x="42.4" y="33.60" width="10.0" height="1.6" fill="#5a5a5a"/><rect x="55.0" y="33.60" width="10.0" height="1.6" fill="#5a5a5a"/><rect x="67.6" y="33.60" width="7.0" height="1.6" fill="#5a5a5a"/><rect x="76.4" y="33.60" width="13.6" height="1.6" fill="#5a5a5a"/><rect x="1.9" y="38.40" width="6.0" height="1.6" fill="#5a5a5a"/><rect x="10.5" y="38.40" width="8.0" height="1.6" fill="#5a5a5a"/><rect x="21.1" y="38.40" width="16.0" height="1.6" fill="#5a5a5a"/><rect x="39.3" y="38.40" width="10.0" height="1.6" fill="#5a5a5a"/><rect x="51.5" y="38.40" width="16.0" height="1.6" fill="#5a5a5a"/><rect x="69.7" y="38.40" width="6.0" height="1.6" fill="#5a5a5a"/><rect x="78.3" y="38.40" width="8.0" height="1.6" fill="#5a5a5a"/><rect x="88.5" y="38.40" width="1.5" height="1.6" fill="#5a5a5a"/></pattern>
      <linearGradient id="lpg" x1="0" y1="0" x2="0.3" y2="1"><stop offset="0" stop-color="#dedede"/><stop offset="1" stop-color="#ececec"/></linearGradient>
      <linearGradient id="rpg" x1="0" y1="0" x2="1" y2="0.3"><stop offset="0" stop-color="#c8c8c8"/><stop offset="0.25" stop-color="#e6e6e6"/><stop offset="1" stop-color="#f2f2f2"/></linearGradient>
      <linearGradient id="lbg" x1="0" y1="0" x2="1" y2="0.4"><stop offset="0" stop-color="#999"/><stop offset="0.7" stop-color="#a4a4a4"/><stop offset="1" stop-color="#b0b0b0"/></linearGradient>
      <linearGradient id="rbg" x1="0" y1="0" x2="1" y2="0"><stop offset="0" stop-color="#bababa"/><stop offset="0.5" stop-color="#c6c6c6"/><stop offset="1" stop-color="#cdcdcd"/></linearGradient>
      <filter id="tblur" x="-5%" y="-5%" width="110%" height="110%"><feGaussianBlur stdDeviation="0.65"/></filter>
      <filter id="bshadow" x="-10%" y="-10%" width="120%" height="130%"><feGaussianBlur stdDeviation="3"/></filter>
    </defs>
    <!-- shadow -->
    <path d="M946 441 L1159 524 L1169 536 L1227 552 L1250 555 L1527 615 L1527 600 L1250 546 L1168 528 L950 432Z" fill="#666" opacity="0.6" filter="url(#bshadow)"/>
    <!-- left block -->
    <path d="M990 404 Q1100 423 1142 449 Q1185 478 1202 524 L1174 524 L1159 519 L948 436 Z" fill="url(#lbg)"/>
    <path d="M958 431 Q1070 452 1120 476 Q1145 490 1160 508 L1159 519 L948 436Z" fill="#b6b6b6"/>
    <path d="M966 428 Q1070 450 1122 476 Q1146 490 1161 508" fill="none" stroke="#5e5e5e" stroke-width="1.4"/>
    <path d="M948 434 L990 404 L1000 407 Q982 420 978 441 Z" fill="#c6c6c6"/>
    <!-- right block -->
    <path d="M1203 522 Q1208 510 1218 498 Q1239 485 1267 481 Q1300 481 1351 490 Q1412 508 1469 526 L1527 585 L1527 608 L1250 549.6 L1234 544 Z" fill="url(#rbg)"/>
    <path d="M1233 538 Q1255 530 1300 530 Q1371 545 1453 567 L1527 588 L1527 608 L1250 549.6 L1236 546Z" fill="#d8d8d8"/>
    <path d="M1233 538 Q1255 530 1300 530 Q1371 545 1453 567 L1527 588" fill="none" stroke="#6e6e6e" stroke-width="1.4"/>
    <path d="M1469 526 L1527 416 L1527 585 Z" fill="#e2e2e2"/>
    <path d="M1469 526 L1527 416" fill="none" stroke="#c4c4c4" stroke-width="1"/>
    <!-- spine -->
    <path d="M1172 523 L1202 524 L1203 522 L1234 544 L1226 542Z" fill="#a8a8a8"/>
    <path d="M1159 519 Q1164 528 1169 531 L1227 547 Q1231 547 1234 544 L1226 541 L1174 523 Z" fill="#a2a2a2"/>
    <path d="M1175 526 L1225 543" fill="none" stroke="#3a3a3a" stroke-width="1.5" stroke-dasharray="1.6 2.4"/>
    <path d="M948 436 L1159 519 Q1164 528 1169 531 L1227 547 Q1231 547 1234 544 L1250 549.6 L1527 608" fill="none" stroke="#646464" stroke-width="1.6"/>
    <!-- left page -->
    <path d="M990 404 L1132 294.5 L1376 294.5 L1275 440 Q1230 495 1204 522 Q1185 478 1142 449 Q1100 423 990 404 Z" fill="url(#lpg)"/>
    <!-- right page -->
    <path d="M1376 294.5 L1527 294.5 L1527 416 L1469 526 Q1412 508 1351 490 Q1300 481 1267 481 Q1239 485 1218 498 Q1208 510 1204 522 Q1230 495 1275 440 Z" fill="url(#rpg)"/>
    <!-- gutter highlight -->
    <path d="M1365 294.5 L1388 294.5 L1286 440 Q1250 480 1222 505 Q1240 480 1265 440 Z" fill="#f0f0f0"/>
    <!-- text blocks -->
    <g filter="url(#tblur)">
    <path d="M1030 384 L1138 296 L1234 294.5 L1104 402 Q1066 390 1030 384Z" fill="url(#txt1)"/>
    <path d="M1249 294.5 L1358 294.5 L1254 440 Q1230 465 1210 468 Q1170 430 1118 403 Z" fill="url(#txt2)"/>
    <path d="M1392 294.5 L1445 294.5 L1343 440 Q1300 450 1258 462 Q1300 380 1392 294.5Z" fill="url(#txt3)"/>
    <path d="M1457 294.5 L1527 294.5 L1527 318 L1496 400 L1465 482 Q1400 462 1336 456 Z" fill="url(#txt4)"/>
    </g>
    <!-- curl shading -->
    <path d="M1388 294.5 L1420 294.5 Q1330 360 1262 462 L1250 470 Q1300 380 1388 294.5Z" fill="#9a9a9a" opacity="0.35"/>
</svg>

    <svg class="abs" style="left:16px;top:585px" width="40" height="40" viewBox="0 0 40 40"><circle cx="20" cy="20" r="16.3" fill="none" stroke="#d0142c" stroke-width="3.2"/><circle cx="20" cy="20" r="13.6" fill="none" stroke="#8a0e1e" stroke-width="0.8"/><path d="M12 11 V20.5 Q12 24 15.5 24 Q19 24 19 20.5 V11 H16.8 V20.5 Q16.8 22 15.5 22 Q14.2 22 14.2 20.5 V11 Z" fill="#c8102e"/><path d="M20.5 16 H22.8 V26.5 H27.5 V28.8 H20.5 Z" fill="#c8102e"/></svg>
    <div class="abs" id="sol" style="left:59px;top:599px;font-size:11px;font-weight:bold;color:#c8102e;line-height:12px;letter-spacing:-0.1px">Solutions</div>
    <div class="abs" id="pgno" style="left:1072px;top:601px;font-size:10px;font-weight:bold;color:#222;line-height:11px">17</div>
    <div class="abs" id="title" style="left:51px;top:49px;font-size:38px;font-weight:bold;color:#000;white-space:nowrap;line-height:44px">What are “specified requirements”?</div>
    <div class="abs" id="body" style="left:45px;top:224px;font-size:25.2px;color:#000;line-height:30px;white-space:nowrap">
      <div>Definition of <b>“specified”</b> — to name or</div>
      <div>state explicitly in detail</div>
      <div>&nbsp;</div>
      <div>Definition of <b>“requirement”</b> — something</div>
      <div>wanted or needed</div>
      <div>&nbsp;</div>
      <div>Specified requirements can be stated in</div>
      <div>normative documents such as <b>regulations</b>,</div>
      <div><b>standards</b> and <b>technical specifications</b>.</div>
    </div>
  </div>
  <div class="abs" id="cap" style="left:493px;top:742px;font-size:22.5px;color:#f2f2f2;line-height:33.5px;white-space:nowrap">your own certain scenarios and requirements.<br>And</div>
  <!-- self tile -->
  <div class="abs" style="left:1653px;top:684px;width:235px;height:132px;border-radius:12px;background:radial-gradient(ellipse at 50% 50%,#7a302c 0%,#6f2b29 45%,#5c2322 100%);box-shadow:0 0 6px rgba(0,0,0,.5)"></div>
  <div class="abs" style="left:1856px;top:692px;width:24px;height:24px;border-radius:12px;background:#720d0b"></div>
  <svg class="abs" style="left:1859px;top:695px" width="18" height="18" viewBox="0 0 24 24"><path d="M19 11h-1.7c0 .74-.16 1.43-.43 2.05l1.23 1.23c.56-.98.9-2.09.9-3.28zm-4.02.17c0-.06.02-.11.02-.17V5c0-1.660-1.34-3-3-3S9 3.34 9 5v.18l5.98 5.99zM4.27 3L3 4.27l6.01 6.01V11c0 1.66 1.33 3 2.99 3 .22 0 .44-.03.65-.08l1.66 1.660c-.71.33-1.5.52-2.31.52-2.76 0-5.3-2.1-5.3-5.1H5c0 3.41 2.72 6.23 6 6.72V21h2v-3.280c.91-.13 1.77-.45 2.540-.9L19.73 21 21 19.73 4.27 3z" fill="#f4c7c2"/></svg>
  <svg class="abs" style="left:1747px;top:726px" width="48" height="48" viewBox="0 0 48 48"><circle cx="24" cy="24" r="23.5" fill="#fbf7f5"/><circle cx="24" cy="24" r="20.2" fill="none" stroke="#8a1a16" stroke-width="3.2" stroke-dasharray="1.6 0.9" opacity="0.9"/><circle cx="24" cy="24" r="16" fill="#7c0c09"/><path d="M27.5 11.5 Q33 15.5 28.5 20 Q25.5 22.5 26 26 Q22 24.5 23.5 20.5 Q25 17 27.5 11.5Z" fill="#e9ad2c"/><path d="M22 20 Q16 23.5 19 28.5 Q21 31 21 34 Q25 31 23.5 27 Q22.5 24 24 21Z" fill="#e9ad2c"/><circle cx="24" cy="22.8" r="3" fill="#fff"/><circle cx="24" cy="22.8" r="1.7" fill="#2aa84a"/><path d="M20.5 34 H27.5 L26 37 H22Z" fill="#e9ad2c"/><rect x="18.5" y="36.6" width="11" height="1.3" fill="#fff"/><circle cx="24" cy="44.3" r="2" fill="#fbf7f5"/></svg>
  <div class="abs" id="tilet" style="left:1663px;top:794px;font-size:12px;letter-spacing:-0.17px;font-weight:bold;color:#fff;line-height:15px;white-space:nowrap">EVSU Alumni Relations and Affair...</div>
  <!-- bottom bar -->
  <div class="abs" id="clock" style="left:24px;top:863px;font-size:15.5px;font-weight:bold;color:#e8eaed;line-height:18px;white-space:nowrap">11:25 AM</div>
  <div class="abs" style="left:102px;top:865px;width:1px;height:14px;background:#e8eaed"></div>
  <div class="abs" id="code" style="left:115px;top:863px;font-size:16px;letter-spacing:0.45px;font-weight:bold;color:#e8eaed;line-height:18px;white-space:nowrap">mzk-znhh-yfh</div>
  <div class="abs" style="left:234px;top:856px;width:32px;height:32px;border-radius:10px;background:#5a2a0c"></div>
  <svg class="abs" style="left:241px;top:862px" width="18" height="20" viewBox="0 0 18 20"><path d="M1 18.5 H17 M3.5 18.5 V2 H11 V18.5 M11 4 H14.5 V18.5" fill="none" stroke="#fcdcc6" stroke-width="1.8"/><rect x="8" y="9" width="1.6" height="2" fill="#fcdcc6"/></svg>
  <!-- controls -->
  <div class="abs" style="left:678px;top:848px;width:88px;height:48px;border-radius:16px;background:#601410"></div>
  <svg class="abs" style="left:695px;top:865px" width="12" height="12" viewBox="0 0 12 12"><path d="M2 8 L6 4 L10 8" fill="none" stroke="#f9dedc" stroke-width="2"/></svg>
  <div class="abs" style="left:718px;top:848px;width:48px;height:48px;border-radius:16px;background:#f9dedc"></div>
  <svg class="abs" style="left:730px;top:860px" width="24" height="24" viewBox="0 0 24 24"><path d="M9.2 5.2 A2.8 2.8 0 0 1 14.8 5 V10.8 M14.6 13.2 Q13.5 14.5 12 14.5 Q9.2 14.5 9.2 11.5 V9.5 M5.8 11 Q6 17.5 12 17.6 Q14 17.6 15.6 16.5 M18.2 11 Q18.2 13 17.3 14.4 M12 17.6 V21" fill="none" stroke="#601410" stroke-width="2"/><path d="M4.5 3.5 L20.5 19.5" stroke="#601410" stroke-width="2.2"/></svg>
  <div class="abs" style="left:774px;top:848px;width:88px;height:48px;border-radius:24px;background:#2b2c2f"></div>
  <svg class="abs" style="left:791px;top:865px" width="12" height="12" viewBox="0 0 12 12"><path d="M2 8 L6 4 L10 8" fill="none" stroke="#8e8f92" stroke-width="2"/></svg>
  <div class="abs" style="left:814px;top:848px;width:48px;height:48px;border-radius:16px;background:#f9dedc"></div>
  <svg class="abs" style="left:826px;top:860px" width="24" height="24" viewBox="0 0 24 24"><path d="M4.5 5.5 V19.5 H16.5 V15.5 M7 5.5 H16.5 V13" fill="none" stroke="#601410" stroke-width="2"/><path d="M16.5 10 L22 6.5 V17.5 L16.5 14Z" fill="#601410"/><path d="M2.5 2.5 L20.5 21" stroke="#601410" stroke-width="2"/></svg>
  <div class="abs" style="left:870px;top:848px;width:56px;height:48px;border-radius:24px;background:#333537"></div>
  <svg class="abs" style="left:886px;top:861px" width="24" height="22" viewBox="0 0 24 22"><rect x="3" y="2" width="18" height="13" fill="none" stroke="#e3e3e3" stroke-width="2"/><path d="M1 19 H23" stroke="#e3e3e3" stroke-width="2"/><path d="M12 5 L8 9 H10.8 V12 H13.2 V9 H16Z" fill="#e3e3e3"/></svg>
  <div class="abs" style="left:934px;top:848px;width:56px;height:48px;border-radius:24px;background:#333537"></div>
  <svg class="abs" style="left:950px;top:860px" width="24" height="24" viewBox="0 0 24 24"><circle cx="12" cy="12" r="9.5" fill="none" stroke="#e3e3e3" stroke-width="2"/><circle cx="8.8" cy="9.8" r="1.5" fill="#e3e3e3"/><circle cx="15.2" cy="9.8" r="1.5" fill="#e3e3e3"/><path d="M7.2 13.5 H16.8 Q16 17.5 12 17.5 Q8 17.5 7.2 13.5Z" fill="#e3e3e3"/></svg>
  <div class="abs" style="left:998px;top:848px;width:56px;height:48px;border-radius:24px;background:#333537"></div>
  <svg class="abs" style="left:1014px;top:860px" width="24" height="24" viewBox="0 0 24 24"><rect x="3.8" y="5" width="16.4" height="14" rx="1" fill="none" stroke="#e3e3e3" stroke-width="2"/><path d="M11 10 H7.3 V14 H11 M16.8 10 H13 V14 H16.8" fill="none" stroke="#e3e3e3" stroke-width="2"/></svg>
  <div class="abs" style="left:1062px;top:848px;width:56px;height:48px;border-radius:24px;background:#333537"></div>
  <svg class="abs" style="left:1077px;top:859px" width="26" height="26" viewBox="0 0 24 24"><path d="M7 13 V5.5 A1.3 1.3 0 0 1 9.6 5.5 V11 M9.6 11 V3.5 A1.3 1.3 0 0 1 12.2 3.5 V11 M12.2 11 V4.5 A1.3 1.3 0 0 1 14.8 4.5 V11 M14.8 11 V7 A1.3 1.3 0 0 1 17.4 7 V15 Q17.4 21 12 21 Q9 21 6.5 18 L3.5 13.5 Q3 12.5 4 12 Q5 11.5 6 12.5 L7 14" fill="none" stroke="#e3e3e3" stroke-width="1.8" stroke-linejoin="round"/></svg>
  <div class="abs" style="left:1126px;top:848px;width:36px;height:48px;border-radius:18px;background:#333537"></div>
  <svg class="abs" style="left:1140px;top:862px" width="8" height="20" viewBox="0 0 8 20"><circle cx="4" cy="3" r="2.2" fill="#e3e3e3"/><circle cx="4" cy="10" r="2.2" fill="#e3e3e3"/><circle cx="4" cy="17" r="2.2" fill="#e3e3e3"/></svg>
  <div class="abs" style="left:1170px;top:848px;width:72px;height:48px;border-radius:24px;background:#dc362e"></div>
  <svg class="abs" style="left:1192px;top:862px" width="28" height="20" viewBox="0 0 28 20"><path d="M2.5 11.5 Q2 8 6 6.5 Q14 3.5 22 6.5 Q26 8 25.5 11.5 L25 13.5 Q24.8 14.5 23.8 14.3 L19.5 13.3 Q18.7 13.1 18.7 12.2 L18.8 10 Q14 8.3 9.2 10 L9.3 12.2 Q9.3 13.1 8.5 13.3 L4.2 14.3 Q3.2 14.5 3 13.5Z" fill="#fff"/></svg>
  <!-- right icons -->
  <svg class="abs" style="left:1776px;top:860px" width="24" height="24" viewBox="0 0 24 24"><circle cx="12" cy="12" r="9.5" fill="none" stroke="#fff" stroke-width="2"/><rect x="11" y="10.5" width="2" height="6" fill="#fff"/><rect x="11" y="7" width="2" height="2" fill="#fff"/></svg>
  <svg class="abs" style="left:1825px;top:861px" width="22" height="22" viewBox="0 0 22 22"><path d="M1.2 1.2 H20.5 V15.2 H5 L1.2 19.5 Z" fill="none" stroke="#fff" stroke-width="2" stroke-linejoin="round"/><rect x="4.5" y="4.2" width="13" height="1.8" fill="#fff"/><rect x="4.5" y="7.3" width="13" height="1.8" fill="#fff"/><rect x="4.5" y="10.3" width="8.5" height="1.8" fill="#fff"/></svg>
  <svg class="abs" style="left:1875px;top:863px" width="18" height="18" viewBox="0 0 18 18"><g fill="#fff"><circle cx="2.5" cy="2.5" r="2.1"/><circle cx="8.7" cy="2.5" r="2.1"/><circle cx="14.9" cy="2.5" r="2.1"/><circle cx="2.5" cy="8.7" r="2.1"/><circle cx="8.7" cy="8.7" r="2.1"/><circle cx="14.9" cy="8.7" r="2.1"/><circle cx="2.5" cy="14.9" r="2.1"/><circle cx="8.7" cy="14.9" r="2.1"/><circle cx="14.9" cy="14.9" r="2.1"/></g></svg>
</div>
<div id="taskbar" class="abs">
  <svg class="abs" style="left:0;top:0" width="1920" height="48" viewBox="0 0 1920 48">
    <defs>
      <linearGradient id="wpg" x1="0" x2="1" y1="0" y2="0">
        <stop offset="0" stop-color="#545b5c"/>
        <stop offset="0.06" stop-color="#4f5759"/>
        <stop offset="0.1" stop-color="#4a505a"/>
        <stop offset="0.19" stop-color="#4b515a"/>
        <stop offset="0.235" stop-color="#655d50"/>
        <stop offset="0.29" stop-color="#7b6e5a"/>
        <stop offset="0.34" stop-color="#8d8270"/>
        <stop offset="0.38" stop-color="#a59a86"/>
        <stop offset="0.42" stop-color="#aca290"/>
        <stop offset="0.445" stop-color="#8d7f62"/>
        <stop offset="0.6" stop-color="#85765a"/>
        <stop offset="0.66" stop-color="#74623f"/>
        <stop offset="0.76" stop-color="#5c4a2f"/>
        <stop offset="0.8" stop-color="#4a3f30"/>
        <stop offset="0.86" stop-color="#2d3440"/>
        <stop offset="1" stop-color="#232c3a"/>
      </linearGradient>
      <filter id="bl4"><feGaussianBlur stdDeviation="4"/></filter>
      <filter id="bl2"><feGaussianBlur stdDeviation="2"/></filter>
    </defs>
    <rect width="1920" height="48" fill="url(#wpg)"/>
    <g filter="url(#bl4)">
      <path d="M470 0 L720 0 L700 20 Q600 18 500 8Z" fill="#a89c84" opacity="0.8"/>
      <path d="M420 48 L430 30 Q540 26 680 30 L690 48Z" fill="#62584a" opacity="0.6"/>
      <path d="M440 30 L680 22 L650 48 L430 48Z" fill="#6f6350" opacity="0.6"/>
      <path d="M690 48 Q700 16 770 6 Q830 2 860 14 L870 48Z" fill="#b6ae9e"/>
      <path d="M700 48 Q740 30 820 28 L860 48Z" fill="#9e9480" opacity="0.7"/>
      <path d="M855 0 L1300 0 Q1340 4 1380 0 L1330 10 Q1100 16 855 11Z" fill="#85661f" opacity="0.85"/>
      <path d="M855 14 L1250 14 L1250 48 L855 48Z" fill="#877a60" opacity="0.6"/>
      <path d="M1250 0 L1560 0 L1490 48 L1250 48Z" fill="#5b482a" opacity="0.8"/>
      <path d="M1510 48 L1640 0 L1920 0 L1920 48Z" fill="#232c3a" opacity="0.9"/>
      
    </g>
    <g fill="#5a5640" opacity="0.55"><ellipse cx="742" cy="12" rx="3" ry="1.5"/><ellipse cx="768" cy="18" rx="2.5" ry="1.2"/><ellipse cx="790" cy="9" rx="3" ry="1.3"/><ellipse cx="752" cy="30" rx="2" ry="1"/><ellipse cx="806" cy="28" rx="3.5" ry="1.5"/><ellipse cx="835" cy="40" rx="3" ry="1.5"/><ellipse cx="720" cy="22" rx="2" ry="1"/><ellipse cx="778" cy="42" rx="4" ry="1.5"/></g>
    <path d="M640 0 Q660 20 700 48 L690 48 Q650 20 632 0Z" fill="#4a4030" opacity="0.4"/>
    <path d="M845 0 L852 0 L860 48 L850 48Z" fill="#3a3428" opacity="0.5"/>
    <path d="M855 0 L1320 0 L1320 10 Q1300 14 1290 11 Q1280 15 1230 12 Q1180 16 1130 13 Q1080 17 1030 14 Q990 18 950 13 Q900 16 855 11Z" fill="#7a5a18" opacity="0.55"/>
    <g fill="#3a3020" opacity="0.6"><ellipse cx="1077" cy="26" rx="4" ry="3"/><ellipse cx="1073" cy="35" rx="3" ry="2"/><ellipse cx="1215" cy="8" rx="10" ry="4"/><ellipse cx="921" cy="42" rx="5" ry="2"/><ellipse cx="1005" cy="45" rx="3" ry="1.5"/><ellipse cx="1330" cy="10" rx="6" ry="3"/><ellipse cx="1343" cy="30" rx="3" ry="2"/></g>
    <!-- search pill -->
    <rect x="631.5" y="8.5" width="215" height="31" rx="15.5" fill="rgba(255,255,255,0.07)" stroke="rgba(255,255,255,0.14)" stroke-width="1"/>
    <!-- windows logo -->
    <g fill="#3cb8f7"><rect x="594.5" y="13" width="11.2" height="11.2" rx="1" fill="#56c6fb"/><rect x="606.8" y="13" width="11.2" height="11.2" rx="1" fill="#49bff9"/><rect x="594.5" y="25.3" width="11.2" height="11.2" rx="1" fill="#2aa9f2"/><rect x="606.8" y="25.3" width="11.2" height="11.2" rx="1" fill="#1e9df0"/></g>
    <!-- search icon -->
    <circle cx="648" cy="22.5" r="6" fill="none" stroke="#f2f2f2" stroke-width="1.6"/><path d="M652.3 27 L657 31.5" stroke="#f2f2f2" stroke-width="1.8"/>
    <text x="668" y="29" font-family="Liberation Sans" font-size="13.3" fill="#f4f4f4">Search</text>
    <!-- island widget -->
    <path d="M798 21 L844 21 Q840 35 821 37 Q802 35 798 21Z" fill="#2f8f8a"/><path d="M799 21 Q820 16 843 21 L843 23 L799 23Z" fill="#6cc3e8"/>
    <circle cx="804" cy="16" r="4" fill="#58a83a"/><circle cx="838" cy="15" r="4" fill="#58a83a"/><rect x="806" y="17" width="8" height="5" fill="#c89a5a"/><rect x="830" y="17" width="8" height="5" fill="#c89a5a"/>
    <g fill="#d9c47a"><ellipse cx="806" cy="27" rx="2.5" ry="1.2"/><ellipse cx="814" cy="29" rx="2.5" ry="1.2"/><ellipse cx="823" cy="27" rx="2.5" ry="1.2"/><ellipse cx="832" cy="29" rx="2.5" ry="1.2"/><ellipse cx="818" cy="33" rx="2.5" ry="1.2"/><ellipse cx="827" cy="33" rx="2" ry="1"/></g>
    <g transform="translate(0,-1.2)"><!-- file explorer -->
    <path d="M863 15 Q863 13 865 13 L872 13 L875 16 L886 16 Q888 16 888 18 L888 36 L863 36Z" fill="#e6a91a"/>
    <path d="M863 20 L888 20 L888 36 Q888 37 886 37 L865 37 Q863 37 863 35Z" fill="#fcc934"/>
    <rect x="869" y="30" width="13" height="4" rx="1" fill="#1e7ad6"/>
    <!-- calculator -->
    <rect x="910" y="13" width="18" height="24" rx="2" fill="#5a6270"/><rect x="912" y="15" width="14" height="5" fill="#52c3f2"/>
    <g fill="#dfe6ef"><rect x="912" y="22" width="4" height="3"/><rect x="917" y="22" width="4" height="3"/><rect x="922" y="22" width="4" height="3"/><rect x="912" y="26.5" width="4" height="3"/><rect x="917" y="26.5" width="4" height="3"/><rect x="922" y="26.5" width="4" height="3"/><rect x="912" y="31" width="4" height="3"/><rect x="917" y="31" width="4" height="3"/><rect x="922" y="31" width="4" height="3"/></g>
    <!-- edge -->
    <circle cx="963" cy="25" r="12" fill="#1d8ee0"/><path d="M953 21 Q957 13 966 13 Q975 14 975 23 Q970 19 963 21 Q958 24 961 31 Q953 29 953 21Z" fill="#3fd18a"/><path d="M961 31 Q966 36 974 31 Q969 37 961 37Z" fill="#0b5ba8"/>
    <circle cx="957" cy="33" r="6" fill="#f0f0f0"/><circle cx="957" cy="31.5" r="2" fill="#555"/><path d="M953.5 36.5 Q957 33 960.5 36.5Z" fill="#555"/>
    <!-- word -->
    <rect x="999" y="14" width="17" height="22" rx="3" fill="#2b7de9"/><rect x="1003" y="14" width="13" height="8" rx="2" fill="#5fb2ff"/><rect x="995" y="22" width="11" height="11" rx="1.5" fill="#185abd"/><text x="996.5" y="31.5" font-family="Liberation Sans" font-weight="bold" font-size="9" fill="#fff">W</text>
    <!-- powerpoint -->
    <circle cx="1052" cy="25" r="11" fill="#ee6b48"/><path d="M1052 14 A11 11 0 0 1 1063 25 L1052 25Z" fill="#ff9a6c"/><path d="M1041 25 A11 11 0 0 0 1052 36 L1052 25Z" fill="#c4314b"/><rect x="1039" y="22" width="10" height="11" rx="1.5" fill="#c43e1c"/><text x="1041" y="31" font-family="Liberation Sans" font-weight="bold" font-size="9" fill="#fff">P</text>
    <!-- evsu app -->
    <rect x="1083" y="13" width="24" height="24" fill="#fff"/><circle cx="1095" cy="25" r="10.5" fill="#7a0d0b"/><circle cx="1095" cy="25" r="9" fill="#fff" opacity="0.25"/><circle cx="1095" cy="25" r="7.5" fill="#7a0d0b"/><path d="M1097 18 Q1100 21 1096 23.5 Q1093 25 1094.5 30 Q1091 27.5 1093.5 24 Q1096 22 1097 18Z" fill="#e8ae2a"/><circle cx="1095" cy="23.5" r="1.3" fill="#2aa84a"/>
    <!-- excel -->
    <rect x="1131" y="13" width="17" height="22" rx="3" fill="#1d9a54"/><rect x="1138" y="13" width="10" height="9" rx="2" fill="#5ed88a"/><rect x="1127" y="22" width="11" height="11" rx="1.5" fill="#107c41"/><text x="1129" y="31.5" font-family="Liberation Sans" font-weight="bold" font-size="9" fill="#fff">X</text>
    <!-- chrome -->
    <g transform="translate(1183,25)"><circle r="12" fill="#1da462"/><path d="M0 -12 A12 12 0 0 1 10.4 6 L5.2 3 A6 6 0 0 0 0 -6Z" fill="#ffcd40" transform="rotate(0)"/><path d="M-10.4 -6 A12 12 0 0 1 10.4 -6 L0 -6 A6 6 0 0 0 -5.2 3Z" fill="#dd5144"/><path d="M10.4 -6 A12 12 0 0 1 0 12 L5.2 3 A6 6 0 0 0 5.2 -3Z" fill="#ffcd40"/><circle r="5.5" fill="#fff"/><circle r="4.2" fill="#4c8bf5"/></g>
    <!-- scanner -->
    <rect x="1215" y="13" width="24" height="24" rx="4" fill="#1a3fb0"/><path d="M1221 19 H1233 L1227 25Z" fill="#fff"/><path d="M1219 27 L1235 21 L1235 31 H1219Z" fill="#fff"/><path d="M1221 29 L1233 24 L1233 29Z" fill="#1a3fb0"/>
    <!-- chrome active -->
    <rect x="1251" y="4" width="40" height="40" rx="4" fill="rgba(255,255,255,0.09)" stroke="rgba(255,255,255,0.1)"/>
    <g transform="translate(1270,25)"><circle r="12" fill="#1da462"/><path d="M-10.4 -6 A12 12 0 0 1 10.4 -6 L0 -6 A6 6 0 0 0 -5.2 3Z" fill="#dd5144"/><path d="M10.4 -6 A12 12 0 0 1 0 12 L5.2 3 A6 6 0 0 0 5.2 -3Z" fill="#ffcd40"/><circle r="5.5" fill="#fff"/><circle r="4.2" fill="#4c8bf5"/></g>
    <circle cx="1280" cy="15" r="7.5" fill="#f2e6e2"/><circle cx="1280" cy="15" r="6" fill="#7a0d0b"/><path d="M1281 10.5 Q1283 12.5 1280.5 14 Q1278.5 15.5 1279.5 19 Q1277 17 1279 14.5 Q1280.5 13 1281 10.5Z" fill="#e8ae2a"/>
    <rect x="1263" y="41" width="16" height="3" rx="1.5" fill="#f08c78"/>
    <!-- chrome person -->
    <g transform="translate(1315,25)"><circle r="12" fill="#1da462"/><path d="M-10.4 -6 A12 12 0 0 1 10.4 -6 L0 -6 A6 6 0 0 0 -5.2 3Z" fill="#dd5144"/><path d="M10.4 -6 A12 12 0 0 1 0 12 L5.2 3 A6 6 0 0 0 5.2 -3Z" fill="#ffcd40"/><circle r="5.5" fill="#fff"/><circle r="4.2" fill="#4c8bf5"/></g>
    <circle cx="1325" cy="15" r="7.5" fill="#eee"/><circle cx="1325" cy="15" r="6.5" fill="#2b2a2f"/><ellipse cx="1325" cy="15.5" rx="3" ry="4" fill="#e2b9a0"/><path d="M1320 12 Q1325 6 1330 12 L1330 20 L1328 20 L1328 13 Q1325 10 1322 13 L1322 20 L1320 20Z" fill="#1a1717"/>
    <rect x="1312" y="42" width="6" height="3" rx="1.5" fill="#aaa"/>
    </g>
    <!-- tray -->
    <g transform="translate(0,-1.5)">
    <path d="M1645 28 L1650 23 L1655 28" fill="none" stroke="#fff" stroke-width="1.4"/>
    <path d="M1675 30 Q1673 30 1673 27.5 Q1673 25 1676 25 Q1677 21 1681 21 Q1685 21 1686 24.5 Q1690 24.5 1690 27.5 Q1690 30 1687 30Z" fill="#c8c8c8"/><path d="M1675 19 L1689 33" stroke="#2a3038" stroke-width="2.5"/><path d="M1675 19 L1689 33" stroke="#d0d0d0" stroke-width="1"/>
    <rect x="1711" y="17" width="6" height="11" rx="3" fill="none" stroke="#f39060" stroke-width="1.4"/><path d="M1708.5 24 Q1708.5 31 1714 31 Q1719.5 31 1719.5 24 M1714 31 V35" fill="none" stroke="#f39060" stroke-width="1.4"/>
    </g>
    <text x="1741" y="20.8" font-family="Liberation Sans" font-size="11.5" letter-spacing="-0.3" fill="#f2f2f2">ENG</text>
    <text x="1745" y="36.8" font-family="Liberation Sans" font-size="11.5" letter-spacing="-0.2" fill="#f2f2f2">US</text>
    <g transform="translate(0,-1.5)"><path d="M1783 22 Q1790 16 1797 22" fill="none" stroke="#8a9099" stroke-width="1.3"/><path d="M1785.5 25 Q1790 21 1794.5 25" fill="none" stroke="#e8e8e8" stroke-width="1.3"/><circle cx="1790" cy="28.5" r="1.5" fill="#fff"/>
    <path d="M1806 22 H1809 L1813 18 V32 L1809 28 H1806Z" fill="none" stroke="#f2f2f2" stroke-width="1.2"/><path d="M1815.5 22 Q1817.5 25 1815.5 28 M1818 20 Q1821 25 1818 30 M1820.5 18 Q1824.5 25 1820.5 32" fill="none" stroke="#f2f2f2" stroke-width="1.2"/>
    </g>
    <text x="1901" y="20.5" text-anchor="end" font-family="Liberation Sans" font-size="12" fill="#f2f2f2">11:25 am</text>
    <text x="1901" y="36.5" text-anchor="end" font-family="Liberation Sans" font-size="12" fill="#f2f2f2">24/02/2026</text>
  </svg>
</div>

</body></html>
